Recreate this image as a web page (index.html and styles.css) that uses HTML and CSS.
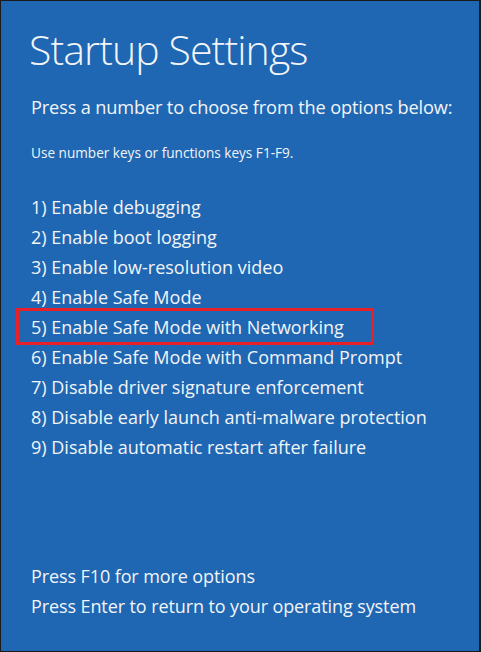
FILE: index.html
```html
<!DOCTYPE html>
<html lang="en">
<head>
<meta charset="utf-8">
<title>Startup Settings</title>
<link rel="stylesheet" href="styles.css">
</head>
<body>
<main class="screen">
  <h1 class="title">Startup Settings</h1>
  <p class="lead">Press a number to choose from the options below:</p>
  <p class="hint">Use number keys or functions keys F1-F9.</p>
  <ol class="options">
    <li class="option">1) Enable debugging</li>
    <li class="option">2) Enable boot logging</li>
    <li class="option">3) Enable low-resolution video</li>
    <li class="option">4) Enable Safe Mode</li>
    <li class="option option-selected">5) Enable Safe Mode with Networking</li>
    <li class="option">6) Enable Safe Mode with Command Prompt</li>
    <li class="option">7) Disable driver signature enforcement</li>
    <li class="option">8) Disable early launch anti-malware protection</li>
    <li class="option">9) Disable automatic restart after failure</li>
  </ol>
  <div class="footer">
    <p class="footer-line">Press F10 for more options</p>
    <p class="footer-line">Press Enter to return to your operating system</p>
  </div>
</main>
</body>
</html>
```

FILE: styles.css
```css
html, body {
  margin: 0;
  padding: 0;
  background: #1f67b2;
}

.screen {
  box-sizing: border-box;
  width: 481px;
  height: 652px;
  background: #1f67b2;
  border-style: solid;
  border-color: #1b1b1b;
  border-width: 1px 2px 1px 1px;
  color: #f2f4f8;
  font-family: "Open Sans", "Noto Sans", sans-serif;
  display: flex;
  flex-direction: column;
  padding: 0 0 0 30px;
}

.title {
  margin: 20px 0 0 -2px;
  font-size: 41px;
  font-weight: 300;
  line-height: 56px;
  letter-spacing: -0.9px;
}

.lead {
  margin: 16px 0 0 0;
  font-size: 18.2px;
  line-height: 28px;
  letter-spacing: -0.15px;
}

.hint {
  margin: 23px 0 0 0;
  font-size: 13.6px;
  line-height: 18px;
  letter-spacing: 0;
}

.options {
  list-style: none;
  margin: 30px 0 0 0;
  padding: 0;
}

.option {
  font-size: 18px;
  line-height: 30px;
  letter-spacing: 0;
}

.option-selected {
  position: relative;
}

.option-selected::before {
  content: "";
  position: absolute;
  left: -15px;
  top: -4px;
  width: 358px;
  height: 37px;
  box-sizing: border-box;
  border: 3px solid #e8202a;
}

.footer {
  margin-top: auto;
  margin-bottom: 30px;
}

.footer-line {
  margin: 0;
  font-size: 18px;
  line-height: 30px;
  letter-spacing: -0.1px;
}
```
